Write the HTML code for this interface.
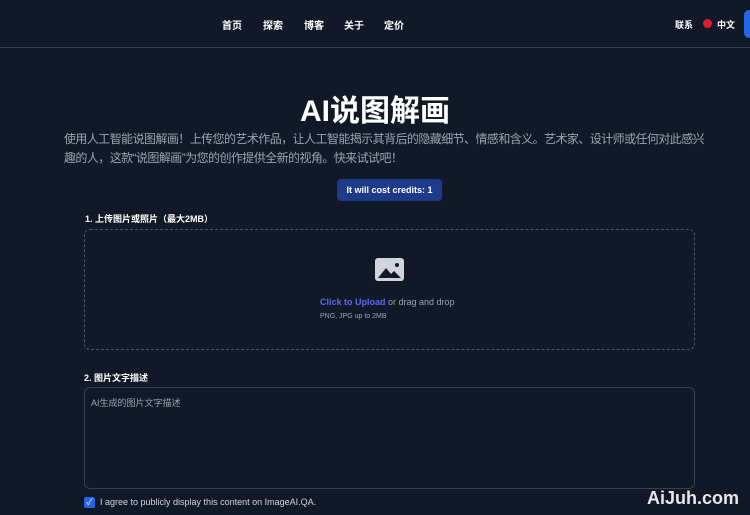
<!DOCTYPE html>
<html><head><meta charset="utf-8"><style>
*{margin:0;padding:0;box-sizing:border-box}
body{width:750px;height:515px;overflow:hidden;background:#111827;font-family:"Liberation Sans","Noto Sans CJK SC",sans-serif;color:#fff;position:relative}
.a{position:absolute;white-space:nowrap}
.nav{font-size:10px;font-weight:bold;color:#fff}
</style></head><body>
<div class="a" style="left:0;top:47px;width:750px;height:1px;background:#374151"></div>
<div class="a nav" style="left:222px;top:17px">首页</div>
<div class="a nav" style="left:263px;top:17px">探索</div>
<div class="a nav" style="left:304px;top:17px">博客</div>
<div class="a nav" style="left:344px;top:17px">关于</div>
<div class="a nav" style="left:384px;top:17px">定价</div>
<div class="a nav" style="left:675px;top:18px;font-size:9px">联系</div>
<div class="a" style="left:703px;top:19px;width:9px;height:9px;border-radius:50%;background:#e11d2a"></div>
<div class="a nav" style="left:717px;top:18px;font-size:9px">中文</div>
<div class="a" style="left:744px;top:10px;width:12px;height:28px;border-radius:5px;background:#2563eb"></div>
<div class="a" style="left:0;top:86px;width:750px;text-align:center;font-size:30px;font-weight:bold">AI说图解画</div>
<div class="a" style="left:64px;top:130px;font-size:12px;line-height:19px;color:#9ca3af;letter-spacing:-0.57px">使用人工智能说图解画！上传您的艺术作品，让人工智能揭示其背后的隐藏细节、情感和含义。艺术家、设计师或任何对此感兴<br>趣的人，这款“说图解画”为您的创作提供全新的视角。快来试试吧！</div>
<div class="a" style="left:337px;top:179px;width:105px;height:22px;border-radius:4px;background:#1e3a8a;font-size:9px;font-weight:bold;text-align:center;line-height:22px">It will cost credits: 1</div>
<div class="a" style="left:85px;top:212px;font-size:9px;font-weight:bold">1. 上传图片或照片（最大2MB）</div>
<div class="a" style="left:84px;top:229px;width:611px;height:121px;border:1px dashed #4b5563;border-radius:6px"></div>
<svg class="a" style="left:375px;top:258px" width="29" height="23" viewBox="0 0 29 23"><rect x="0" y="0" width="29" height="23" rx="3" fill="#d1d5db"/><circle cx="22" cy="7" r="2" fill="#111827"/><path d="M3 20 L11 10 L16 16 L19 13 L26 20 Z" fill="#111827"/></svg>
<div class="a" style="left:320px;top:297px;font-size:9px;color:#9ca3af"><span style="color:#6366f1;font-weight:bold">Click to Upload</span> or drag and drop</div>
<div class="a" style="left:320px;top:313px;font-size:7px;color:#9ca3af">PNG, JPG up to 2MB</div>
<div class="a" style="left:84px;top:371px;font-size:9px;font-weight:bold">2. 图片文字描述</div>
<div class="a" style="left:84px;top:387px;width:611px;height:102px;border:1px solid #374151;border-radius:6px"></div>
<div class="a" style="left:91px;top:396px;font-size:9px;color:#9ca3af">AI生成的图片文字描述</div>
<div class="a" style="left:84px;top:497px;width:11px;height:11px;border-radius:2px;background:#2563eb;color:#fff;font-size:9px;line-height:11px;text-align:center">✓</div>
<div class="a" style="left:100px;top:497px;font-size:9px;color:#d1d5db">I agree to publicly display this content on ImageAI.QA.</div>
<div class="a" style="left:647px;top:488px;font-size:18px;font-weight:bold;color:#e5e7eb">AiJuh.com</div>
</body></html>
